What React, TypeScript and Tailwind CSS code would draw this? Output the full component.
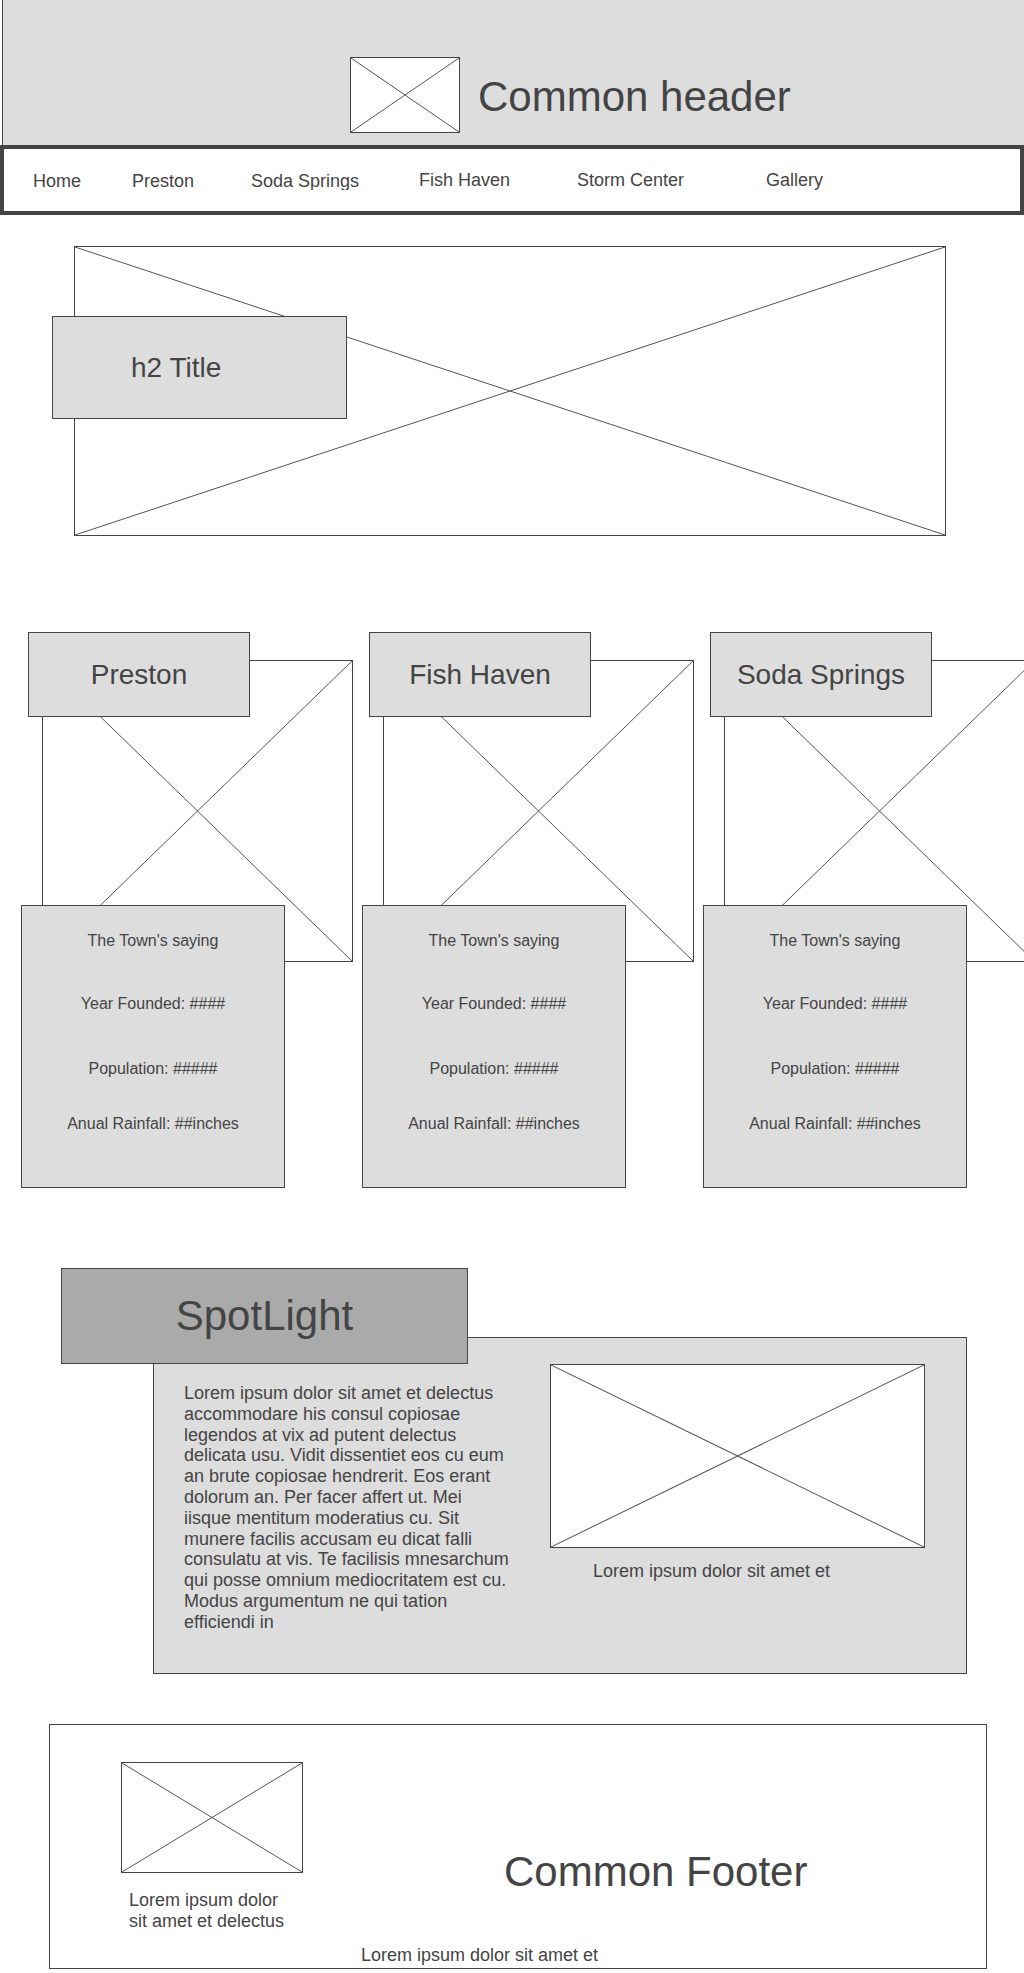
import React from "react";

function XBox({ className }: { className: string }) {
  return (
    <div className={`border border-[#444] bg-white ${className}`}>
      <svg className="block w-full h-full" viewBox="0 0 100 100" preserveAspectRatio="none">
        <line x1="0" y1="0" x2="100" y2="100" stroke="#555" strokeWidth="1" vectorEffect="non-scaling-stroke" />
        <line x1="100" y1="0" x2="0" y2="100" stroke="#555" strokeWidth="1" vectorEffect="non-scaling-stroke" />
      </svg>
    </div>
  );
}

function TownCard({ name }: { name: string }) {
  return (
    <div className="w-[264px] shrink-0">
      <div className="relative z-10 ml-[7px] w-[222px] h-[85px] bg-[#dddddd] border border-[#444] flex items-center justify-center text-[28px] leading-[32px]">
        {name}
      </div>
      <XBox className="ml-[21px] mt-[-57px] w-[311px] h-[302px]" />
      <div className="relative mt-[-57px] w-[264px] h-[283px] bg-[#dddddd] border border-[#444] flex flex-col items-center text-[16px] leading-[18px] pt-[26px]">
        <div>The Town's saying</div>
        <div className="mt-[45px]">Year Founded: ####</div>
        <div className="mt-[47px]">Population: #####</div>
        <div className="mt-[37px]">Anual Rainfall: ##inches</div>
      </div>
    </div>
  );
}

export default function App() {
  return (
    <div className="w-full overflow-hidden bg-white text-[#444] font-['Liberation_Sans',Arial,sans-serif]">
      {/* Header */}
      <div className="ml-[2px] h-[145px] border-l border-[#444] bg-[#dddddd] pl-[347px] pt-[57px] flex items-start">
        <XBox className="w-[110px] h-[76px] shrink-0" />
        <div className="ml-[18px] mt-[16px] text-[42px] leading-[48px] whitespace-nowrap">Common header</div>
      </div>

      {/* Nav */}
      <nav className="h-[70px] border-4 border-[#444] bg-white flex items-center pl-[29px] text-[18px] leading-[21px] whitespace-nowrap">
        <div className="w-[99px] mt-[3px]">Home</div>
        <div className="w-[119px] mt-[3px]">Preston</div>
        <div className="w-[168px] mt-[3px]">
          <span className="inline-block h-[19px] overflow-hidden align-top">Soda Springs</span>
        </div>
        <div className="w-[158px]">Fish Haven</div>
        <div className="w-[189px]">Storm Center</div>
        <div>Gallery</div>
      </nav>

      {/* Hero */}
      <div className="pt-[31px] pl-[74px]">
        <div className="relative w-[872px] h-[290px]">
          <XBox className="w-[872px] h-[290px]" />
          <div className="absolute left-[-22px] top-[70px] w-[295px] h-[103px] bg-[#dddddd] border border-[#444] flex items-center pl-[78px] text-[28px] leading-[32px]">
            h2 Title
          </div>
        </div>
      </div>

      {/* Town cards */}
      <div className="mt-[96px] pl-[21px] flex gap-[77px]">
        <TownCard name="Preston" />
        <TownCard name="Fish Haven" />
        <TownCard name="Soda Springs" />
      </div>

      {/* Spotlight */}
      <div className="mt-[80px]">
        <div className="relative z-10 ml-[61px] w-[407px] h-[96px] bg-[#aaaaaa] border border-[#444] flex items-center justify-center text-[42px] leading-[48px]">
          SpotLight
        </div>
        <div className="ml-[153px] mt-[-27px] w-[814px] h-[337px] bg-[#dddddd] border border-[#444] flex items-start">
          <p className="ml-[30px] mt-[45px] w-[329px] shrink-0 text-[18px] leading-[20.8px]">
            Lorem ipsum dolor sit amet et delectus accommodare his consul copiosae legendos at vix ad putent delectus delicata usu. Vidit dissentiet eos cu eum an brute copiosae hendrerit. Eos erant dolorum an. Per facer affert ut. Mei iisque mentitum moderatius cu. Sit munere facilis accusam eu dicat falli consulatu at vis. Te facilisis mnesarchum qui posse omnium mediocritatem est cu. Modus argumentum ne qui tation efficiendi in
          </p>
          <div className="ml-[37px] mt-[26px]">
            <XBox className="w-[375px] h-[184px]" />
            <div className="ml-[43px] mt-[13px] text-[18px] leading-[21px] whitespace-nowrap">Lorem ipsum dolor sit amet et</div>
          </div>
        </div>
      </div>

      {/* Footer */}
      <footer className="mt-[50px] ml-[49px] w-[938px] h-[245px] border border-[#444] bg-white">
        <div className="flex items-start">
          <div className="ml-[71px] mt-[37px]">
            <XBox className="w-[182px] h-[111px]" />
            <div className="ml-[8px] mt-[17px] text-[18px] leading-[21px] whitespace-nowrap">
              Lorem ipsum dolor
              <br />
              sit amet et delectus
            </div>
          </div>
          <div className="ml-[201px] mt-[123px] text-[42px] leading-[48px] whitespace-nowrap">Common Footer</div>
        </div>
        <div className="ml-[311px] mt-[13px] text-[18px] leading-[21px] whitespace-nowrap">Lorem ipsum dolor sit amet et</div>
      </footer>
    </div>
  );
}
